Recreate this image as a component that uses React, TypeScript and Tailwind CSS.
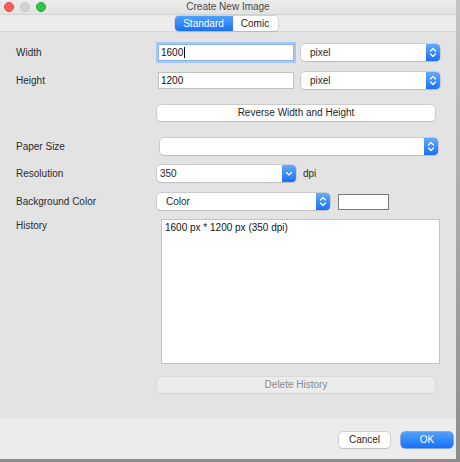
import React from "react";

const Stepper: React.FC = () => (
  <svg width="8" height="11" viewBox="0 0 8 11" fill="none">
    <path d="M1.5 4 L4 1.5 L6.5 4" stroke="white" strokeWidth="1.2" strokeLinecap="round" strokeLinejoin="round" />
    <path d="M1.5 7 L4 9.5 L6.5 7" stroke="white" strokeWidth="1.2" strokeLinecap="round" strokeLinejoin="round" />
  </svg>
);

const Chevron: React.FC = () => (
  <svg width="8" height="6" viewBox="0 0 8 6" fill="none">
    <path d="M1.5 1.5 L4 4 L6.5 1.5" stroke="white" strokeWidth="1.2" strokeLinecap="round" strokeLinejoin="round" />
  </svg>
);

const PopUp: React.FC<{ value?: string; className: string; combo?: boolean }> = ({
  value,
  className,
  combo,
}) => (
  <div
    className={`flex h-[17px] items-stretch rounded-[4px] bg-white shadow-[0_0_0_0.5px_#b3b3b3,0_1px_1px_rgba(0,0,0,0.12)] ${className}`}
  >
    <span className={`flex-1 text-[10px] leading-[17px] text-[#1f1f1f] ${combo ? "pl-[3px]" : "pl-[9px]"}`}>
      {value}
    </span>
    <span className="flex w-[14px] items-center justify-center rounded-r-[4px] bg-gradient-to-b from-[#63abfb] to-[#1a6ff6]">
      {combo ? <Chevron /> : <Stepper />}
    </span>
  </div>
);

const Label: React.FC<{ children: React.ReactNode }> = ({ children }) => (
  <span className="w-[141px] shrink-0 text-[10px] text-[#2b2b2b]">{children}</span>
);

export default function App() {
  return (
    <div className="h-[462px] w-[460px] bg-gradient-to-b from-[#c4c4c4] to-[#8c8c8c] font-['Liberation_Sans',Arial,sans-serif]">
      <div className="flex h-[459px] w-[456px] flex-col bg-[#e3e3e3]">
        {/* title bar */}
        <div className="relative flex h-[15px] items-center border-b border-[#d2d2d2] bg-gradient-to-b from-[#ececec] to-[#e2e2e2]">
          <div className="flex items-center gap-[6px] pl-[4px]">
            <span className="h-[10px] w-[10px] rounded-full border border-[#e2463f] bg-[#fc5f57]" />
            <span className="h-[10px] w-[10px] rounded-full border border-[#c8c8c8] bg-[#d3d3d3]" />
            <span className="h-[10px] w-[10px] rounded-full border border-[#24a83a] bg-[#2fc841]" />
          </div>
          <span className="absolute inset-x-0 top-0 text-center text-[10px] leading-[14px] text-[#4a4a4a]">
            Create New Image
          </span>
        </div>

        {/* tab strip */}
        <div className="flex h-[17px] items-center justify-center border-b border-[#d6d6d6] bg-[#ececec]">
          <div className="-ml-[4px] flex h-[15px] overflow-hidden rounded-[4px] text-[10px] shadow-[0_0_0_0.5px_#b8b8b8,0_1px_1px_rgba(0,0,0,0.12)]">
            <span className="flex w-[58px] items-center justify-center bg-gradient-to-b from-[#4fa0fb] to-[#1b71f6] text-white">
              Standard
            </span>
            <span className="flex w-[45px] items-center justify-center bg-white text-[#1f1f1f]">Comic</span>
          </div>
        </div>

        {/* content */}
        <div className="flex flex-1 flex-col pl-[16px]">
          <div className="mt-[12px] flex h-[17px] items-center">
            <Label>Width</Label>
            <div className="ml-[1px] h-[17px] w-[136px] border border-[#8cb4ea] bg-white pl-[2px] text-[10px] leading-[15px] text-[#111] shadow-[0_0_0_2px_#a6c8f4]">
              1600<span className="ml-[1px] inline-block h-[11px] w-px translate-y-[2px] bg-[#111]" />
            </div>
            <PopUp value="pixel" className="ml-[7px] w-[139px]" />
          </div>

          <div className="mt-[11px] flex h-[17px] items-center">
            <Label>Height</Label>
            <div className="ml-[1px] h-[17px] w-[136px] border border-[#c2c2c2] bg-white pl-[2px] text-[10px] leading-[15px] text-[#111]">
              1200
            </div>
            <PopUp value="pixel" className="ml-[7px] w-[139px]" />
          </div>

          <div className="mt-[16px] flex h-[16px] items-center">
            <Label>{""}</Label>
            <button className="h-[16px] w-[278px] rounded-[4px] bg-white text-[10px] leading-[16px] text-[#1f1f1f] shadow-[0_0_0_0.5px_#b3b3b3,0_1px_1px_rgba(0,0,0,0.12)]">
              Reverse Width and Height
            </button>
          </div>

          <div className="mt-[17px] flex h-[17px] items-center">
            <Label>Paper Size</Label>
            <PopUp className="ml-[3px] w-[278px]" />
          </div>

          <div className="mt-[10px] flex h-[17px] items-center">
            <Label>Resolution</Label>
            <PopUp value="350" combo className="w-[139px]" />
            <span className="ml-[7px] text-[10px] text-[#2b2b2b]">dpi</span>
          </div>

          <div className="mt-[11px] flex h-[17px] items-center">
            <Label>Background Color</Label>
            <PopUp value="Color" className="w-[173px]" />
            <span className="ml-[8px] h-[16px] w-[51px] border border-[#7a7a7a] bg-white" />
          </div>

          <div className="mt-[9px] flex items-start">
            <span className="-mt-[1px] w-[141px] shrink-0 text-[10px] text-[#2b2b2b]">History</span>
            <div className="ml-[4px] h-[145px] w-[279px] border border-[#c4c4c4] bg-white px-[3px] text-[10px] text-[#111]">
              1600 px * 1200 px (350 dpi)
            </div>
          </div>

          <div className="mt-[13px] flex h-[16px] items-center">
            <Label>{""}</Label>
            <button className="h-[16px] w-[278px] rounded-[4px] bg-[#ececec] text-[10px] leading-[16px] text-[#8a8a8a] shadow-[0_0_0_0.5px_#cfcfcf,0_1px_1px_rgba(0,0,0,0.05)]">
              Delete History
            </button>
          </div>
        </div>

        {/* footer */}
        <div className="flex h-[41px] items-start justify-end gap-[11px] border-t border-[#e6e6e6] bg-[#ececec] pr-[3px] pt-[13px]">
          <button className="h-[16px] w-[51px] rounded-[4px] bg-white text-[10px] leading-[16px] text-[#1f1f1f] shadow-[0_0_0_0.5px_#b3b3b3,0_1px_1px_rgba(0,0,0,0.12)]">
            Cancel
          </button>
          <button className="h-[16px] w-[52px] rounded-[4px] bg-gradient-to-b from-[#4fa0fb] to-[#1470f7] text-[10px] leading-[16px] text-white shadow-[0_0_0_0.5px_#1a64d6]">
            OK
          </button>
        </div>
      </div>
    </div>
  );
}
